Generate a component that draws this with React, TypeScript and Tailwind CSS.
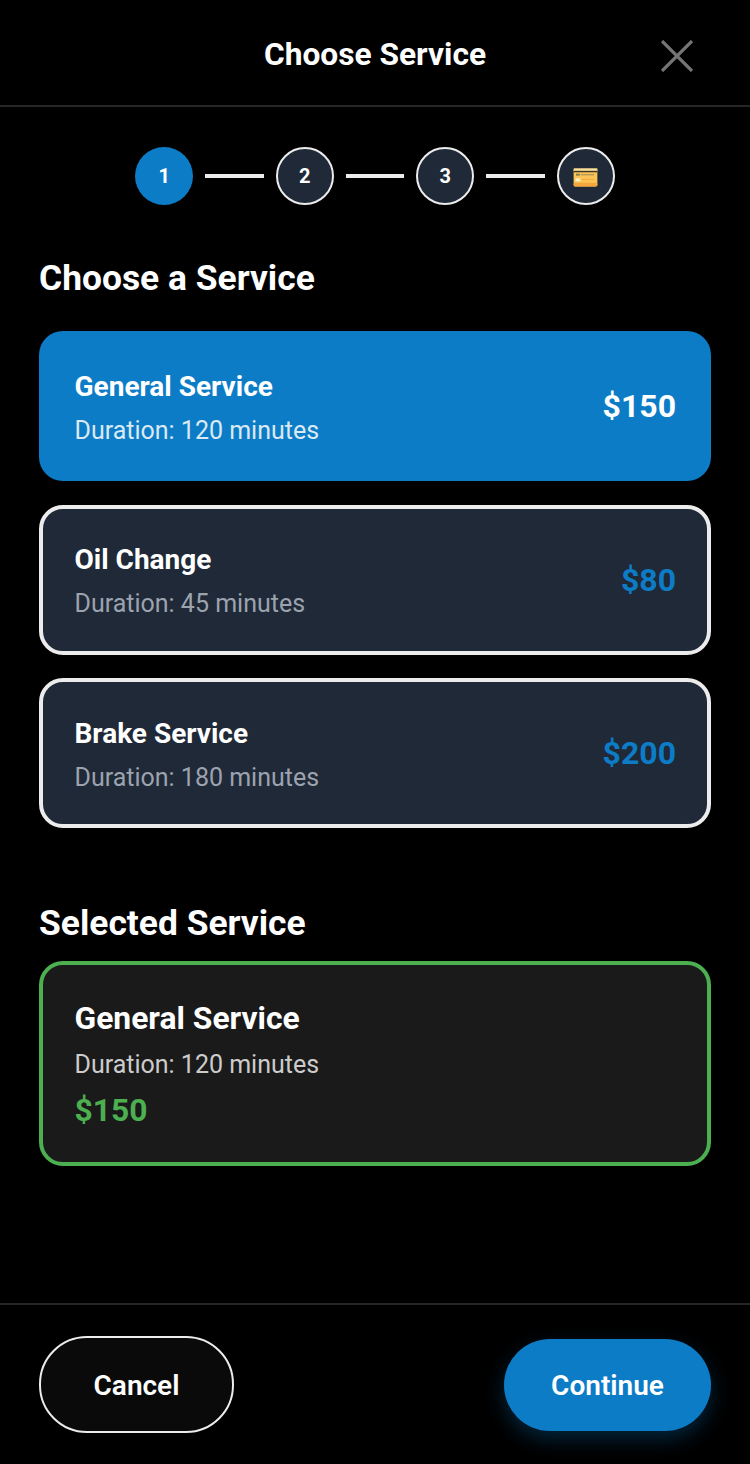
const services = [
  { name: 'General Service', duration: 'Duration: 120 minutes', price: '$150', selected: true },
  { name: 'Oil Change', duration: 'Duration: 45 minutes', price: '$80', selected: false },
  { name: 'Brake Service', duration: 'Duration: 180 minutes', price: '$200', selected: false },
]

function CardEmoji() {
  return (
    <svg width="25" height="19" viewBox="0 0 26 20" className="mt-[2px]">
      <rect x="0.5" y="0.5" width="25" height="19" rx="1.5" fill="#fbc457" />
      <rect x="0.5" y="0.5" width="25" height="2.5" fill="#f3dfa0" />
      <rect x="0.5" y="3" width="25" height="1.5" fill="#3d3524" />
      <rect x="3" y="6" width="4" height="2" fill="#8a7a4a" />
      <rect x="8" y="6.5" width="14" height="1.2" fill="#a89058" />
      <rect x="2.5" y="11" width="5" height="3" fill="#fff0c4" />
      <rect x="9" y="11.5" width="13" height="1" fill="#f2a73c" />
      <rect x="0.5" y="15.5" width="25" height="4" rx="1.5" fill="#f5a63f" />
    </svg>
  )
}

function Step({ active, children }: { active?: boolean; children: React.ReactNode }) {
  return (
    <div
      className={`w-[58px] h-[58px] rounded-full flex items-center justify-center text-white text-[20px] font-bold ${
        active ? 'bg-[#0d7cc7]' : 'bg-[#1f2937] border-2 border-[#ececec]'
      }`}
    >
      {children}
    </div>
  )
}

function Line() {
  return <div className="w-[58.5px] h-1 mx-3 bg-[#ececec]" />
}

export default function App() {
  return (
    <div className="w-[750px] h-[1464px] bg-black text-white flex flex-col font-['Roboto',sans-serif]">
      <header className="h-[107px] shrink-0 border-b-2 border-[#262626] flex items-center justify-center relative">
        <h1 className="text-[31.7px] font-bold leading-none mt-[4px]">Choose Service</h1>
        <svg className="absolute left-[660px] top-[40px]" width="34" height="32" viewBox="0 0 34 32" fill="none" stroke="#757575" strokeWidth="3.2">
          <path d="M2 1l30 30M32 1L2 31" />
        </svg>
      </header>

      <main className="flex-1 px-[39px]">
        <div className="flex items-center justify-center mt-[40px]">
          <Step active>1</Step>
          <Line />
          <Step>2</Step>
          <Line />
          <Step>3</Step>
          <Line />
          <Step>
            <CardEmoji />
          </Step>
        </div>

        <h2 className="text-[35.4px] font-bold leading-[44px] mt-[51px]">Choose a Service</h2>

        <div className="mt-[31px] flex flex-col gap-[23.5px]">
          {services.map((s) => (
            <div
              key={s.name}
              className={`h-[150px] rounded-[24px] flex items-center justify-between ${
                s.selected ? 'bg-[#0d7cc7] pl-[35.5px] pr-[35px]' : 'bg-[#1f2937] border-4 border-[#ececec] pl-[31.5px] pr-[31px]'
              }`}
            >
              <div className="pt-[4px]">
                <div className="text-[28px] font-bold leading-[36px]">{s.name}</div>
                <div className={`text-[25px] leading-[34px] mt-[9px] ${s.selected ? 'text-[#dbe9f4]' : 'text-[#9ca3af]'}`}>
                  {s.duration}
                </div>
              </div>
              <div className={`text-[32px] font-bold ${s.selected ? 'text-white' : 'text-[#0d7cc7]'}`}>{s.price}</div>
            </div>
          ))}
        </div>

        <h2 className="text-[35.4px] font-bold leading-[44px] mt-[73px]">Selected Service</h2>

        <div className="mt-[16px] h-[205px] rounded-[24px] bg-[#1a1a1a] border-4 border-[#4caf50] pl-[31.5px] pr-[32px] pt-[33px]">
          <div className="text-[31.8px] font-bold leading-[40px]">General Service</div>
          <div className="text-[25px] leading-[34px] mt-[10px] text-[#cccccc]">Duration: 120 minutes</div>
          <div className="text-[31.8px] font-bold leading-[40px] mt-[8px] text-[#4caf50]">$150</div>
        </div>
      </main>

      <footer className="h-[161px] shrink-0 border-t-2 border-[#262626] px-[39px] flex items-center justify-between">
        <button className="w-[195px] h-[97px] rounded-[48px] bg-[#0a0a0a] border-2 border-[#ececec] text-[28px] font-semibold pt-[3px]">
          Cancel
        </button>
        <button className="w-[207px] h-[92px] rounded-[46px] bg-[#0d7cc7] text-[28px] font-semibold pt-[3px] shadow-[0_8px_20px_rgba(13,124,199,0.3)]">
          Continue
        </button>
      </footer>
    </div>
  )
}
